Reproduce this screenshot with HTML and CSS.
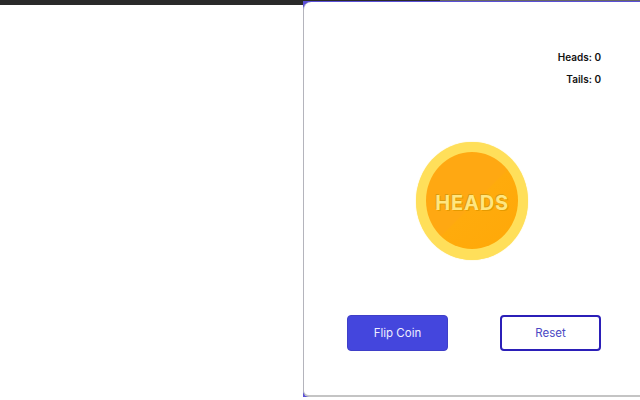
FILE: index.html
```html
<!DOCTYPE html>
<html lang="en">
<head>
<meta charset="utf-8">
<title>Coin Flip</title>
<link rel="stylesheet" href="styles.css">
</head>
<body>
<div class="topbar">
  <span class="bar-left"></span>
  <span class="bar-mid"></span>
  <span class="bar-right"></span>
</div>
<main class="stage">
  <div class="spacer"></div>
  <div class="panel-back">
    <section class="panel">
      <div class="scores">
        <p class="score">Heads: 0</p>
        <p class="score">Tails: 0</p>
      </div>
      <div class="coin-wrap">
        <div class="coin"><span class="coin-face"></span><span class="coin-label">HEADS</span></div>
      </div>
      <div class="actions">
        <button class="btn btn-primary">Flip Coin</button>
        <button class="btn btn-outline">Reset</button>
      </div>
    </section>
  </div>
</main>
</body>
</html>
```
FILE: styles.css
```css
* { box-sizing: border-box; }
html, body { margin: 0; height: 400px; overflow: hidden; background: #fff; }
body { font-family: "Inter", "Roboto", sans-serif; }
.topbar { display: flex; height: 1px; align-items: flex-start; }
.bar-left { width: 304px; height: 5px; background: #2a2a2a; flex: none; }
.bar-mid { width: 136px; height: 2px; background: #2a2a2a; flex: none; }
.bar-right { flex: 1; height: 2px; background: #666; }
.stage { display: flex; height: 396px; }
.spacer { width: 303px; flex: none; }
.panel-back {
  width: 345px; flex: none; background: #5a4fd6; position: relative;
  padding-top: 1px;
}
.panel {
  height: 395px; background: #fff;
  border-left: 1px solid #b4b4bc; border-bottom: 2px solid #c4c4c4;
  border-radius: 8px 0 0 6px; padding: 49px 47px 0 43px;
  display: flex; flex-direction: column;
}
.scores { display: flex; flex-direction: column; align-items: flex-end; gap: 9px; height: 40px; }
.score { margin: 0; font-size: 10px; line-height: 13px; font-weight: 600; color: #111; }
.coin-wrap { display: flex; justify-content: center; margin-top: 51px; padding-right: 4px; }
.coin {
  width: 112px; height: 118px; border-radius: 50%; background: #ffdf5a; position: relative;
  display: flex; align-items: center; justify-content: center; box-shadow: 0 0 1px #ffdf5a;
}
.coin-face {
  position: absolute; left: 10px; top: 10px; width: 92px; height: 97px; border-radius: 50%;
  background: linear-gradient(135deg, #ffa812 0, #ffa812 52%, #ffab0c 53%, #ffa808 100%);
}
.coin-label {
  position: relative; font-size: 20px; font-weight: 700; letter-spacing: 0.8px; color: #ffe680;
  text-shadow: -1px -1px 0 #d89a10, 1px 1px 0 #e69a00; margin-top: 3px;
}
.actions { display: flex; justify-content: space-between; margin-top: 55px; }
.btn { width: 101px; height: 36px; border-radius: 4px; font: 400 11.5px "Inter", "Roboto", sans-serif; padding: 0 0 1px; }
.btn-primary { background: #4446dd; color: #eef; border: 1px solid #3f3fc8; }
.btn-outline { background: #fff; color: #4a48c4; border: 2px solid #2b1fb8; }
```
